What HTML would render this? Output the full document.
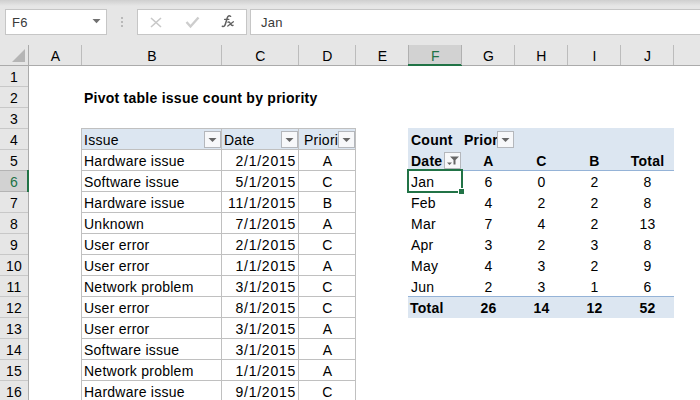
<!DOCTYPE html><html><head><meta charset="utf-8"><style>
*{margin:0;padding:0;box-sizing:border-box}
html,body{width:700px;height:400px;overflow:hidden;background:#fff;font-family:"Liberation Sans",sans-serif}
.a{position:absolute}
.t{position:absolute;white-space:pre;font-size:14px;line-height:21px;height:21px;color:#000;letter-spacing:0.25px}
.b{font-weight:bold}
</style></head><body>
<div class="a" style="left:0px;top:0px;width:700px;height:65px;background:#e6e6e6;"></div>
<div class="a" style="left:0px;top:0px;width:700px;height:6px;background:linear-gradient(#cfcfcf,#e6e6e6);"></div>
<div class="a" style="left:5px;top:9px;width:102px;height:26px;background:#fff;border:1px solid #c6c6c6"></div>
<div class="t" style="left:12px;top:12px;color:#3a3a3a;font-size:13px;letter-spacing:0.3px">F6</div>
<svg class="a" style="left:92px;top:19px" width="9" height="5"><path d="M0.5 0H8.5L4.5 4.3Z" fill="#707070"/></svg>
<div class="a" style="left:121px;top:17px;width:2px;height:2px;background:#b9b9b9;"></div>
<div class="a" style="left:121px;top:21px;width:2px;height:2px;background:#b9b9b9;"></div>
<div class="a" style="left:121px;top:25px;width:2px;height:2px;background:#b9b9b9;"></div>
<div class="a" style="left:137px;top:9px;width:110px;height:26px;background:#fff;border:1px solid #c6c6c6"></div>
<svg class="a" style="left:149px;top:16px" width="14" height="13"><path d="M2 2L12 11M12 2L2 11" stroke="#c8c8c8" stroke-width="1.6" fill="none"/></svg>
<svg class="a" style="left:185px;top:16px" width="15" height="13"><path d="M1.5 6L5.5 10.5L13.5 1.5" stroke="#cdcdcd" stroke-width="2.4" fill="none"/></svg>
<svg class="a" style="left:216px;top:10px" width="26" height="22"><g stroke="#606060" fill="none" stroke-linecap="round"><path d="M6.3 16.3Q8.6 17.2 9.4 14L11.4 7.4Q12.3 5 14.6 6.3" stroke-width="1.5"/><path d="M8.6 9.4H12.8" stroke-width="1.3"/><path d="M12 12.2Q13.4 11.5 14.4 13.5Q15.4 16 17 15.3" stroke-width="1.4"/><path d="M17.4 11.8L11.8 16" stroke-width="1.3"/></g></svg>
<div class="a" style="left:250px;top:9px;width:460px;height:26px;background:#fff;border:1px solid #c6c6c6"></div>
<div class="t" style="left:261px;top:12px;color:#3a3a3a;font-size:13px;letter-spacing:0.3px">Jan</div>
<div class="a" style="left:0px;top:65px;width:700px;height:1px;background:#ababab;"></div>
<svg class="a" style="left:12px;top:49px" width="14" height="14"><path d="M13 0V13H0Z" fill="#b5b5b5"/></svg>
<div class="a" style="left:81px;top:45px;width:1px;height:20px;background:#bcbcbc;"></div>
<div class="t" style="left:29px;top:46px;width:53px;text-align:center;color:#000;">A</div>
<div class="a" style="left:221px;top:45px;width:1px;height:20px;background:#bcbcbc;"></div>
<div class="t" style="left:82px;top:46px;width:140px;text-align:center;color:#000;">B</div>
<div class="a" style="left:298px;top:45px;width:1px;height:20px;background:#bcbcbc;"></div>
<div class="t" style="left:222px;top:46px;width:77px;text-align:center;color:#000;">C</div>
<div class="a" style="left:355px;top:45px;width:1px;height:20px;background:#bcbcbc;"></div>
<div class="t" style="left:299px;top:46px;width:57px;text-align:center;color:#000;">D</div>
<div class="a" style="left:408px;top:45px;width:1px;height:20px;background:#b0b0b0;"></div>
<div class="t" style="left:356px;top:46px;width:53px;text-align:center;color:#000;">E</div>
<div class="a" style="left:409px;top:45px;width:52px;height:20px;background:#d2d2d2;"></div>
<div class="a" style="left:408px;top:64px;width:54px;height:2px;background:#217346;"></div>
<div class="a" style="left:461px;top:45px;width:1px;height:20px;background:#b0b0b0;"></div>
<div class="t" style="left:409px;top:46px;width:53px;text-align:center;color:#217346;">F</div>
<div class="a" style="left:514px;top:45px;width:1px;height:20px;background:#bcbcbc;"></div>
<div class="t" style="left:462px;top:46px;width:53px;text-align:center;color:#000;">G</div>
<div class="a" style="left:567px;top:45px;width:1px;height:20px;background:#bcbcbc;"></div>
<div class="t" style="left:515px;top:46px;width:53px;text-align:center;color:#000;">H</div>
<div class="a" style="left:620px;top:45px;width:1px;height:20px;background:#bcbcbc;"></div>
<div class="t" style="left:568px;top:46px;width:53px;text-align:center;color:#000;">I</div>
<div class="a" style="left:673px;top:45px;width:1px;height:20px;background:#bcbcbc;"></div>
<div class="t" style="left:621px;top:46px;width:53px;text-align:center;color:#000;">J</div>
<div class="a" style="left:28px;top:45px;width:1px;height:20px;background:#ababab;"></div>
<div class="a" style="left:0px;top:66px;width:28px;height:334px;background:#e6e6e6;"></div>
<div class="a" style="left:28px;top:65px;width:1px;height:335px;background:#ababab;"></div>
<div class="a" style="left:0px;top:86px;width:28px;height:1px;background:#c8c8c8;"></div>
<div class="t" style="left:0px;top:67px;width:28px;text-align:center;color:#000;">1</div>
<div class="a" style="left:0px;top:107px;width:28px;height:1px;background:#c8c8c8;"></div>
<div class="t" style="left:0px;top:88px;width:28px;text-align:center;color:#000;">2</div>
<div class="a" style="left:0px;top:128px;width:28px;height:1px;background:#c8c8c8;"></div>
<div class="t" style="left:0px;top:109px;width:28px;text-align:center;color:#000;">3</div>
<div class="a" style="left:0px;top:149px;width:28px;height:1px;background:#c8c8c8;"></div>
<div class="t" style="left:0px;top:130px;width:28px;text-align:center;color:#000;">4</div>
<div class="a" style="left:0px;top:170px;width:28px;height:1px;background:#c8c8c8;"></div>
<div class="t" style="left:0px;top:151px;width:28px;text-align:center;color:#000;">5</div>
<div class="a" style="left:0px;top:191px;width:28px;height:1px;background:#c8c8c8;"></div>
<div class="a" style="left:0px;top:171px;width:27px;height:20px;background:#d2d2d2;"></div>
<div class="a" style="left:0px;top:170px;width:27px;height:1px;background:#b4b4b4;"></div>
<div class="a" style="left:0px;top:191px;width:27px;height:1px;background:#b4b4b4;"></div>
<div class="a" style="left:27px;top:170px;width:2px;height:22px;background:#217346;"></div>
<div class="t" style="left:0px;top:172px;width:28px;text-align:center;color:#217346;">6</div>
<div class="a" style="left:0px;top:212px;width:28px;height:1px;background:#c8c8c8;"></div>
<div class="t" style="left:0px;top:193px;width:28px;text-align:center;color:#000;">7</div>
<div class="a" style="left:0px;top:233px;width:28px;height:1px;background:#c8c8c8;"></div>
<div class="t" style="left:0px;top:214px;width:28px;text-align:center;color:#000;">8</div>
<div class="a" style="left:0px;top:254px;width:28px;height:1px;background:#c8c8c8;"></div>
<div class="t" style="left:0px;top:235px;width:28px;text-align:center;color:#000;">9</div>
<div class="a" style="left:0px;top:275px;width:28px;height:1px;background:#c8c8c8;"></div>
<div class="t" style="left:0px;top:256px;width:28px;text-align:center;color:#000;">10</div>
<div class="a" style="left:0px;top:296px;width:28px;height:1px;background:#c8c8c8;"></div>
<div class="t" style="left:0px;top:277px;width:28px;text-align:center;color:#000;">11</div>
<div class="a" style="left:0px;top:317px;width:28px;height:1px;background:#c8c8c8;"></div>
<div class="t" style="left:0px;top:298px;width:28px;text-align:center;color:#000;">12</div>
<div class="a" style="left:0px;top:338px;width:28px;height:1px;background:#c8c8c8;"></div>
<div class="t" style="left:0px;top:319px;width:28px;text-align:center;color:#000;">13</div>
<div class="a" style="left:0px;top:359px;width:28px;height:1px;background:#c8c8c8;"></div>
<div class="t" style="left:0px;top:340px;width:28px;text-align:center;color:#000;">14</div>
<div class="a" style="left:0px;top:380px;width:28px;height:1px;background:#c8c8c8;"></div>
<div class="t" style="left:0px;top:361px;width:28px;text-align:center;color:#000;">15</div>
<div class="a" style="left:0px;top:401px;width:28px;height:1px;background:#c8c8c8;"></div>
<div class="t" style="left:0px;top:382px;width:28px;text-align:center;color:#000;">16</div>
<div class="t b" style="left:84px;top:88px;">Pivot table issue count by priority</div>
<div class="a" style="left:81px;top:128px;width:275px;height:22px;background:#dce6f1;border:1px solid #c0c0c0"></div>
<div class="a" style="left:81px;top:128px;width:1px;height:272px;background:#c0c0c0;"></div>
<div class="a" style="left:221px;top:128px;width:1px;height:272px;background:#c0c0c0;"></div>
<div class="a" style="left:298px;top:128px;width:1px;height:272px;background:#c0c0c0;"></div>
<div class="a" style="left:355px;top:128px;width:1px;height:272px;background:#c0c0c0;"></div>
<div class="a" style="left:81px;top:170px;width:275px;height:1px;background:#c0c0c0;"></div>
<div class="a" style="left:81px;top:191px;width:275px;height:1px;background:#c0c0c0;"></div>
<div class="a" style="left:81px;top:212px;width:275px;height:1px;background:#c0c0c0;"></div>
<div class="a" style="left:81px;top:233px;width:275px;height:1px;background:#c0c0c0;"></div>
<div class="a" style="left:81px;top:254px;width:275px;height:1px;background:#c0c0c0;"></div>
<div class="a" style="left:81px;top:275px;width:275px;height:1px;background:#c0c0c0;"></div>
<div class="a" style="left:81px;top:296px;width:275px;height:1px;background:#c0c0c0;"></div>
<div class="a" style="left:81px;top:317px;width:275px;height:1px;background:#c0c0c0;"></div>
<div class="a" style="left:81px;top:338px;width:275px;height:1px;background:#c0c0c0;"></div>
<div class="a" style="left:81px;top:359px;width:275px;height:1px;background:#c0c0c0;"></div>
<div class="a" style="left:81px;top:380px;width:275px;height:1px;background:#c0c0c0;"></div>
<div class="a" style="left:81px;top:401px;width:275px;height:1px;background:#c0c0c0;"></div>
<div class="t" style="left:84px;top:130px;">Issue</div>
<div class="t" style="left:224px;top:130px;">Date</div>
<div class="a" style="left:304px;top:130px;width:34px;height:21px;overflow:hidden"><div class="t" style="left:0px;top:0px;">Priority</div></div>
<div class="a" style="left:204px;top:131px;width:17px;height:17px;background:#f7f8fa;border:1px solid #b4b7bc"></div><svg class="a" style="left:208px;top:138px" width="9" height="5"><path d="M0.5 0H8.5L4.5 4Z" fill="#666"/></svg>
<div class="a" style="left:281px;top:131px;width:17px;height:17px;background:#f7f8fa;border:1px solid #b4b7bc"></div><svg class="a" style="left:285px;top:138px" width="9" height="5"><path d="M0.5 0H8.5L4.5 4Z" fill="#666"/></svg>
<div class="a" style="left:338px;top:131px;width:17px;height:17px;background:#f7f8fa;border:1px solid #b4b7bc"></div><svg class="a" style="left:342px;top:138px" width="9" height="5"><path d="M0.5 0H8.5L4.5 4Z" fill="#666"/></svg>
<div class="t" style="left:84px;top:151px;">Hardware issue</div>
<div class="t" style="left:221px;top:151px;width:75px;text-align:right;letter-spacing:0.75px">2/1/2015</div>
<div class="t" style="left:299px;top:151px;width:57px;text-align:center;">A</div>
<div class="t" style="left:84px;top:172px;">Software issue</div>
<div class="t" style="left:221px;top:172px;width:75px;text-align:right;letter-spacing:0.75px">5/1/2015</div>
<div class="t" style="left:299px;top:172px;width:57px;text-align:center;">C</div>
<div class="t" style="left:84px;top:193px;">Hardware issue</div>
<div class="t" style="left:221px;top:193px;width:75px;text-align:right;letter-spacing:0.75px">11/1/2015</div>
<div class="t" style="left:299px;top:193px;width:57px;text-align:center;">B</div>
<div class="t" style="left:84px;top:214px;">Unknown</div>
<div class="t" style="left:221px;top:214px;width:75px;text-align:right;letter-spacing:0.75px">7/1/2015</div>
<div class="t" style="left:299px;top:214px;width:57px;text-align:center;">A</div>
<div class="t" style="left:84px;top:235px;">User error</div>
<div class="t" style="left:221px;top:235px;width:75px;text-align:right;letter-spacing:0.75px">2/1/2015</div>
<div class="t" style="left:299px;top:235px;width:57px;text-align:center;">C</div>
<div class="t" style="left:84px;top:256px;">User error</div>
<div class="t" style="left:221px;top:256px;width:75px;text-align:right;letter-spacing:0.75px">1/1/2015</div>
<div class="t" style="left:299px;top:256px;width:57px;text-align:center;">A</div>
<div class="t" style="left:84px;top:277px;">Network problem</div>
<div class="t" style="left:221px;top:277px;width:75px;text-align:right;letter-spacing:0.75px">3/1/2015</div>
<div class="t" style="left:299px;top:277px;width:57px;text-align:center;">C</div>
<div class="t" style="left:84px;top:298px;">User error</div>
<div class="t" style="left:221px;top:298px;width:75px;text-align:right;letter-spacing:0.75px">8/1/2015</div>
<div class="t" style="left:299px;top:298px;width:57px;text-align:center;">C</div>
<div class="t" style="left:84px;top:319px;">User error</div>
<div class="t" style="left:221px;top:319px;width:75px;text-align:right;letter-spacing:0.75px">3/1/2015</div>
<div class="t" style="left:299px;top:319px;width:57px;text-align:center;">A</div>
<div class="t" style="left:84px;top:340px;">Software issue</div>
<div class="t" style="left:221px;top:340px;width:75px;text-align:right;letter-spacing:0.75px">3/1/2015</div>
<div class="t" style="left:299px;top:340px;width:57px;text-align:center;">A</div>
<div class="t" style="left:84px;top:361px;">Network problem</div>
<div class="t" style="left:221px;top:361px;width:75px;text-align:right;letter-spacing:0.75px">1/1/2015</div>
<div class="t" style="left:299px;top:361px;width:57px;text-align:center;">A</div>
<div class="t" style="left:84px;top:382px;">Hardware issue</div>
<div class="t" style="left:221px;top:382px;width:75px;text-align:right;letter-spacing:0.75px">9/1/2015</div>
<div class="t" style="left:299px;top:382px;width:57px;text-align:center;">C</div>
<div class="a" style="left:408px;top:128px;width:266px;height:42px;background:#dce6f1;"></div>
<div class="a" style="left:408px;top:170px;width:266px;height:1px;background:#95b3d7;"></div>
<div class="a" style="left:408px;top:296px;width:266px;height:22px;background:#dce6f1;"></div>
<div class="a" style="left:408px;top:296px;width:266px;height:1px;background:#95b3d7;"></div>
<div class="t b" style="left:411px;top:130px;">Count</div>
<div class="a" style="left:464px;top:130px;width:33px;height:21px;overflow:hidden"><div class="t b" style="left:0px;top:0px;">Priority</div></div>
<div class="a" style="left:497px;top:131px;width:17px;height:17px;background:#f7f8fa;border:1px solid #b4b7bc"></div><svg class="a" style="left:501px;top:138px" width="9" height="5"><path d="M0.5 0H8.5L4.5 4Z" fill="#666"/></svg>
<div class="t b" style="left:411px;top:151px;">Date</div>
<div class="a" style="left:444px;top:152px;width:17px;height:17px;background:#f7f8fa;border:1px solid #b4b7bc"></div><svg class="a" style="left:444px;top:152px" width="17" height="17"><path d="M6 4.5H15L11.5 8V12.5H9.5V8Z" fill="#666"/><path d="M3 10.5H8L5.5 13Z" fill="#666"/></svg>
<div class="t b" style="left:462px;top:151px;width:53px;text-align:center;">A</div>
<div class="t b" style="left:515px;top:151px;width:53px;text-align:center;">C</div>
<div class="t b" style="left:568px;top:151px;width:53px;text-align:center;">B</div>
<div class="t b" style="left:621px;top:151px;width:53px;text-align:center;">Total</div>
<div class="t" style="left:411px;top:172px;">Jan</div>
<div class="t" style="left:462px;top:172px;width:53px;text-align:center;">6</div>
<div class="t" style="left:515px;top:172px;width:53px;text-align:center;">0</div>
<div class="t" style="left:568px;top:172px;width:53px;text-align:center;">2</div>
<div class="t" style="left:621px;top:172px;width:53px;text-align:center;">8</div>
<div class="t" style="left:411px;top:193px;">Feb</div>
<div class="t" style="left:462px;top:193px;width:53px;text-align:center;">4</div>
<div class="t" style="left:515px;top:193px;width:53px;text-align:center;">2</div>
<div class="t" style="left:568px;top:193px;width:53px;text-align:center;">2</div>
<div class="t" style="left:621px;top:193px;width:53px;text-align:center;">8</div>
<div class="t" style="left:411px;top:214px;">Mar</div>
<div class="t" style="left:462px;top:214px;width:53px;text-align:center;">7</div>
<div class="t" style="left:515px;top:214px;width:53px;text-align:center;">4</div>
<div class="t" style="left:568px;top:214px;width:53px;text-align:center;">2</div>
<div class="t" style="left:621px;top:214px;width:53px;text-align:center;">13</div>
<div class="t" style="left:411px;top:235px;">Apr</div>
<div class="t" style="left:462px;top:235px;width:53px;text-align:center;">3</div>
<div class="t" style="left:515px;top:235px;width:53px;text-align:center;">2</div>
<div class="t" style="left:568px;top:235px;width:53px;text-align:center;">3</div>
<div class="t" style="left:621px;top:235px;width:53px;text-align:center;">8</div>
<div class="t" style="left:411px;top:256px;">May</div>
<div class="t" style="left:462px;top:256px;width:53px;text-align:center;">4</div>
<div class="t" style="left:515px;top:256px;width:53px;text-align:center;">3</div>
<div class="t" style="left:568px;top:256px;width:53px;text-align:center;">2</div>
<div class="t" style="left:621px;top:256px;width:53px;text-align:center;">9</div>
<div class="t" style="left:411px;top:277px;">Jun</div>
<div class="t" style="left:462px;top:277px;width:53px;text-align:center;">2</div>
<div class="t" style="left:515px;top:277px;width:53px;text-align:center;">3</div>
<div class="t" style="left:568px;top:277px;width:53px;text-align:center;">1</div>
<div class="t" style="left:621px;top:277px;width:53px;text-align:center;">6</div>
<div class="t b" style="left:410px;top:298px;">Total</div>
<div class="t b" style="left:462px;top:298px;width:53px;text-align:center;">26</div>
<div class="t b" style="left:515px;top:298px;width:53px;text-align:center;">14</div>
<div class="t b" style="left:568px;top:298px;width:53px;text-align:center;">12</div>
<div class="t b" style="left:621px;top:298px;width:53px;text-align:center;">52</div>
<div class="a" style="left:407px;top:169px;width:56px;height:24px;background:transparent;border:2px solid #217346"></div>
<div class="a" style="left:458px;top:188px;width:7px;height:7px;background:#217346;border:1px solid #fff"></div>
</body></html>
